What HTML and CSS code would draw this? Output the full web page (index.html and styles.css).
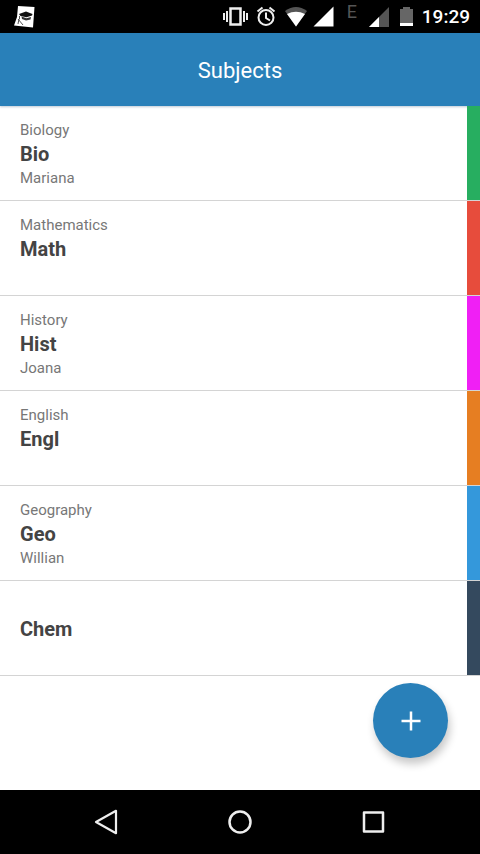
FILE: index.html
```html
<!DOCTYPE html>
<html lang="en">
<head>
<meta charset="utf-8">
<meta name="viewport" content="width=device-width, initial-scale=1">
<title>Subjects</title>
<link rel="stylesheet" href="styles.css">
</head>
<body>
<div class="status-bar">
  <svg class="app-icon" width="24" height="33" viewBox="0 0 24 33" aria-hidden="true">
    <path fill="#fff" d="M6 6 22.500 7 21 27.500 2 25.500 5 17Z"/>
    <path fill="#111" d="M7 14 14 11.500 20.500 14 20 15.500 14.500 17.200 8.500 16Z"/>
    <path fill="#333" d="M9.500 16.500 14.500 18.200 19 17 18.500 19.500 14 20.500 10 19Z"/>
    <path fill="none" stroke="#555" stroke-width="1" d="M7.500 16v3M6 19l5 6M7 19l-1 5"/>
  </svg>
  <div class="indicators">
    <svg width="29" height="33" viewBox="0 0 29 33" aria-hidden="true">
      <path fill="none" stroke="#eee" stroke-width="2.500" d="M9.500 8.500h10v16h-10z"/>
      <path fill="none" stroke="#eee" stroke-width="2" d="M3 13v7M6 11v11M23 11v11M26 13v7"/>
    </svg>
    <svg width="25" height="33" viewBox="0 0 25 33" aria-hidden="true">
      <g fill="none" stroke="#eee" stroke-width="2">
        <circle cx="12" cy="17.500" r="7.500"/>
        <path d="M12 12.500v5.500l4 2.500M3.500 11.500l5-4M20.500 11.500l-5-4"/>
      </g>
    </svg>
    <svg width="25" height="33" viewBox="0 0 25 33" aria-hidden="true">
      <path fill="#555" d="M2 11Q13 3 24 11L13 26.500Z"/>
      <path fill="#fff" d="M4 14Q13 9.500 22 14L13 26.500Z"/>
    </svg>
    <svg width="27" height="33" viewBox="0 0 27 33" aria-hidden="true">
      <path fill="#fff" d="M21.500 6.500v20H1.500z"/>
    </svg>
    <span class="network">E</span>
    <svg width="28" height="33" viewBox="0 0 28 33" aria-hidden="true">
      <path fill="#555" d="M24 7v20H4z"/>
      <path fill="#fff" d="M14 17v10H4z"/>
    </svg>
    <svg width="21" height="33" viewBox="0 0 21 33" aria-hidden="true">
      <path fill="#666" d="M6 7h7v2h3v17H3V9h3z"/>
      <path fill="#fff" d="M3 23h13v3H3z"/>
    </svg>
    <time class="clock">19:29</time>
  </div>
</div>

<header class="app-bar"><h1>Subjects</h1></header>

<main class="content">
  <ul class="subjects">
    <li class="subject green"><span>Biology</span><strong>Bio</strong><span>Mariana</span></li>
    <li class="subject red"><span>Mathematics</span><strong>Math</strong><span></span></li>
    <li class="subject magenta"><span>History</span><strong>Hist</strong><span>Joana</span></li>
    <li class="subject orange"><span>English</span><strong>Engl</strong><span></span></li>
    <li class="subject blue"><span>Geography</span><strong>Geo</strong><span>Willian</span></li>
    <li class="subject navy"><span></span><strong>Chem</strong><span></span></li>
  </ul>
  <button class="add" type="button" aria-label="Add subject">
    <svg width="20" height="20" viewBox="0 0 20 20" aria-hidden="true"><path fill="none" stroke="#fff" stroke-width="2.500" d="M10 .5v19M.5 10h19"/></svg>
  </button>
</main>

<nav class="nav-bar" aria-label="System">
  <button type="button" aria-label="Back">
    <svg width="28" height="28" viewBox="0 0 28 28" aria-hidden="true"><path fill="none" stroke="#eee" stroke-width="2.200" stroke-linejoin="round" d="M24 2.800v22.400L4 14z"/></svg>
  </button>
  <button type="button" aria-label="Home">
    <svg width="28" height="28" viewBox="0 0 28 28" aria-hidden="true"><circle cx="14" cy="14" r="10.500" fill="none" stroke="#eee" stroke-width="2.500"/></svg>
  </button>
  <button type="button" aria-label="Recent apps">
    <svg width="28" height="28" viewBox="0 0 28 28" aria-hidden="true"><path fill="none" stroke="#eee" stroke-width="2.500" stroke-linejoin="round" d="M4 4.500h19v19H4z"/></svg>
  </button>
</nav>
</body>
</html>
```
FILE: styles.css
```css
* {
  box-sizing: border-box;
}

body {
  margin: 0;
  min-height: 100vh;
  display: flex;
  flex-direction: column;
  background: #fff;
  font-family: Roboto, sans-serif;
}

svg {
  display: block;
  flex: none;
}

button {
  padding: 0;
  border: 0;
  background: none;
  cursor: pointer;
}

.status-bar {
  display: flex;
  justify-content: space-between;
  padding: 0 10px 0 12px;
  background: #000;
  color: #fff;
}

.indicators {
  display: flex;
  align-items: center;
  gap: 4px;
}

.network {
  width: 18px;
  padding-bottom: 9px;
  color: #555;
  font-size: 18px;
  line-height: 24px;
  text-align: center;
}

.clock {
  font-size: 19px;
  font-weight: 500;
  line-height: 33px;
}

.app-bar {
  position: relative;
  padding: 24px 20px 21px;
  background: #2980b9;
  color: #fff;
  text-align: center;
  box-shadow: 0 1px 2px rgba(41, 80, 120, 0.3);
}

.app-bar h1 {
  margin: 0;
  font-size: 22px;
  font-weight: 400;
  line-height: 28px;
}

.content {
  position: relative;
  flex: 1;
}

.subjects {
  margin: 0;
  padding: 0;
  list-style: none;
}

.subject {
  display: grid;
  grid-template-rows: repeat(3, 24px);
  align-items: center;
  padding: 12px 20px 10px;
  border-bottom: 1px solid #d4d4d4;
  background: linear-gradient(var(--color), var(--color)) right / 13px 100% no-repeat;
  color: #777;
  font-size: 15px;
  line-height: 24px;
}

.subject strong {
  color: #444;
  font-size: 20px;
  font-weight: 700;
}

.green { --color: #27ae60; }
.red { --color: #e74c3c; }
.magenta { --color: #f01ff5; }
.orange { --color: #e67e22; }
.blue { --color: #3498db; }
.navy { --color: #34495e; }

.add {
  position: absolute;
  right: 32px;
  bottom: 32px;
  width: 75px;
  height: 75px;
  display: grid;
  place-items: center;
  border-radius: 50%;
  background: #2980b9;
  box-shadow: 2px 6px 8px rgba(0, 0, 0, 0.22);
}

.nav-bar {
  display: flex;
  justify-content: center;
  padding: 18px 0;
  background: #000;
}

.nav-bar button {
  width: 28%;
  display: grid;
  place-items: center;
}
```
